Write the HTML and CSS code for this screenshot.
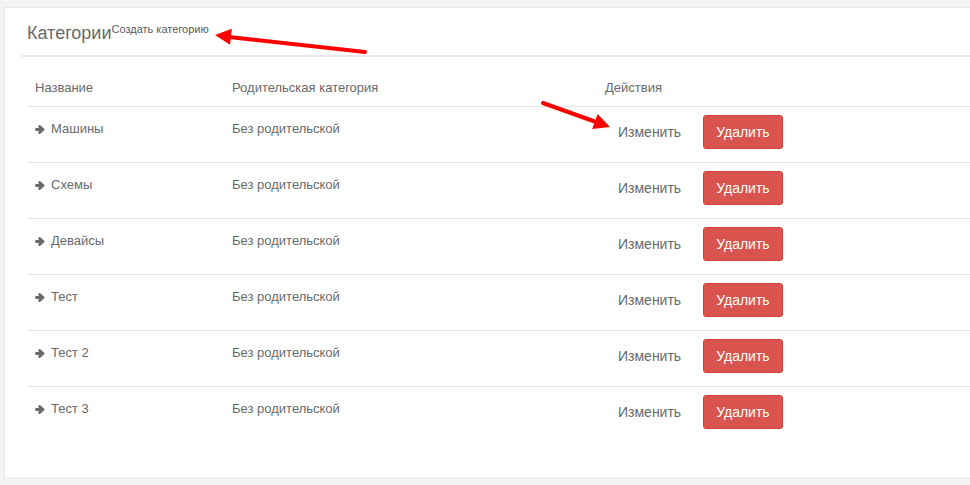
FILE: index.html
```html
<!DOCTYPE html>
<html lang="ru">
<head>
<meta charset="utf-8">
<title>Категории</title>
<link rel="stylesheet" href="styles.css">
</head>
<body>
<div class="card">
  <div class="card-header">
    <h5 class="title">Категории</h5><a class="create-link" href="#">Создать категорию</a>
  </div>
  <table class="cat-table">
    <thead>
      <tr>
        <th class="col-name">Название</th>
        <th class="col-parent">Родительская категория</th>
        <th class="col-actions">Действия</th>
      </tr>
    </thead>
    <tbody>
      <tr>
        <td class="txt"><span class="ico"><svg viewBox="0 0 10 9" width="10" height="9"><path d="M1.4 4.5H7.2" /><path d="M4.7 1.5L8 4.5L4.7 7.5" /></svg></span>Машины</td>
        <td class="txt">Без родительской</td>
        <td class="act"><div class="actions"><a class="btn btn-link" href="#">Изменить</a><button class="btn btn-danger">Удалить</button></div></td>
      </tr>
      <tr>
        <td class="txt"><span class="ico"><svg viewBox="0 0 10 9" width="10" height="9"><path d="M1.4 4.5H7.2" /><path d="M4.7 1.5L8 4.5L4.7 7.5" /></svg></span>Схемы</td>
        <td class="txt">Без родительской</td>
        <td class="act"><div class="actions"><a class="btn btn-link" href="#">Изменить</a><button class="btn btn-danger">Удалить</button></div></td>
      </tr>
      <tr>
        <td class="txt"><span class="ico"><svg viewBox="0 0 10 9" width="10" height="9"><path d="M1.4 4.5H7.2" /><path d="M4.7 1.5L8 4.5L4.7 7.5" /></svg></span>Девайсы</td>
        <td class="txt">Без родительской</td>
        <td class="act"><div class="actions"><a class="btn btn-link" href="#">Изменить</a><button class="btn btn-danger">Удалить</button></div></td>
      </tr>
      <tr>
        <td class="txt"><span class="ico"><svg viewBox="0 0 10 9" width="10" height="9"><path d="M1.4 4.5H7.2" /><path d="M4.7 1.5L8 4.5L4.7 7.5" /></svg></span>Тест</td>
        <td class="txt">Без родительской</td>
        <td class="act"><div class="actions"><a class="btn btn-link" href="#">Изменить</a><button class="btn btn-danger">Удалить</button></div></td>
      </tr>
      <tr>
        <td class="txt"><span class="ico"><svg viewBox="0 0 10 9" width="10" height="9"><path d="M1.4 4.5H7.2" /><path d="M4.7 1.5L8 4.5L4.7 7.5" /></svg></span>Тест 2</td>
        <td class="txt">Без родительской</td>
        <td class="act"><div class="actions"><a class="btn btn-link" href="#">Изменить</a><button class="btn btn-danger">Удалить</button></div></td>
      </tr>
      <tr>
        <td class="txt"><span class="ico"><svg viewBox="0 0 10 9" width="10" height="9"><path d="M1.4 4.5H7.2" /><path d="M4.7 1.5L8 4.5L4.7 7.5" /></svg></span>Тест 3</td>
        <td class="txt">Без родительской</td>
        <td class="act"><div class="actions"><a class="btn btn-link" href="#">Изменить</a><button class="btn btn-danger">Удалить</button></div></td>
      </tr>
    </tbody>
  </table>
</div>
<svg class="annot" width="970" height="485" viewBox="0 0 970 485">
  <line x1="365" y1="52" x2="229" y2="37" />
  <polygon points="215,35 231.8,28.8 230,44.8" />
  <line x1="543" y1="103" x2="596" y2="122" />
  <polygon points="610,127 597.6,114.1 592.2,129.1" />
</svg>
</body>
</html>
```

FILE: styles.css
```css
html, body {
  margin: 0;
  padding: 0;
}
body {
  background: #f4f4f5;
  font-family: "Liberation Sans", Arial, sans-serif;
  font-size: 13px;
  color: #676a6c;
  width: 970px;
  height: 485px;
  overflow: hidden;
  position: relative;
}
.card {
  margin: 7px 0 0 4px;
  background: #fff;
  border: 1px solid #e6e7ec;
  border-right: none;
  padding: 0 0 36px 17px;
}
.card-header {
  border-bottom: 2px solid #e7eaec;
  padding: 15px 0 12px 5px;
  height: 20px;
  white-space: nowrap;
}
.title {
  display: inline-block;
  vertical-align: top;
  margin: 0;
  font-size: 18px;
  line-height: 20px;
  font-weight: normal;
  color: #676a6c;
}
.create-link {
  display: inline-block;
  vertical-align: top;
  font-size: 11px;
  line-height: 13px;
  color: #555b63;
  text-decoration: none;
}
.cat-table {
  margin-left: 5px;
  width: calc(100% - 5px);
  border-collapse: separate;
  border-spacing: 0;
}
.cat-table th {
  text-align: left;
  font-weight: normal;
  vertical-align: bottom;
  height: 49px;
  box-sizing: border-box;
  padding: 0 8px 9px 8px;
  line-height: 18px;
  color: #676a6c;
}
.col-name { width: 197px; }
.col-parent { width: 373px; }
.cat-table td {
  border-top: 1px solid #e4e6e9;
  height: 56px;
  box-sizing: border-box;
  vertical-align: top;
  line-height: 18px;
  padding: 0 8px;
}
.cat-table td.txt {
  padding-top: 13px;
}
.cat-table td.act {
  padding-top: 8px;
}
.ico {
  display: inline-block;
  width: 10px;
  height: 9px;
  margin-right: 6px;
  vertical-align: -1px;
}
.ico svg {
  display: block;
  fill: none;
  stroke: #676a6c;
  stroke-width: 2.8;
  stroke-linecap: round;
  stroke-linejoin: round;
}
.actions {
  display: flex;
  gap: 9px;
  align-items: flex-start;
}
.btn {
  display: inline-block;
  box-sizing: border-box;
  height: 34px;
  padding: 6px 12px;
  border: 1px solid transparent;
  border-radius: 3px;
  font-family: "Liberation Sans", Arial, sans-serif;
  font-size: 14px;
  line-height: 20px;
  text-decoration: none;
  margin: 0;
}
.btn-link {
  color: #676a6c;
  background: transparent;
}
.btn-danger {
  color: #fff;
  background: #d9534f;
  border-color: #d43f3a;
}
.annot {
  position: absolute;
  top: 0;
  left: 0;
  pointer-events: none;
}
.annot line {
  stroke: #ff0000;
  stroke-width: 4;
  stroke-linecap: round;
}
.annot polygon {
  fill: #ff0000;
}
```
